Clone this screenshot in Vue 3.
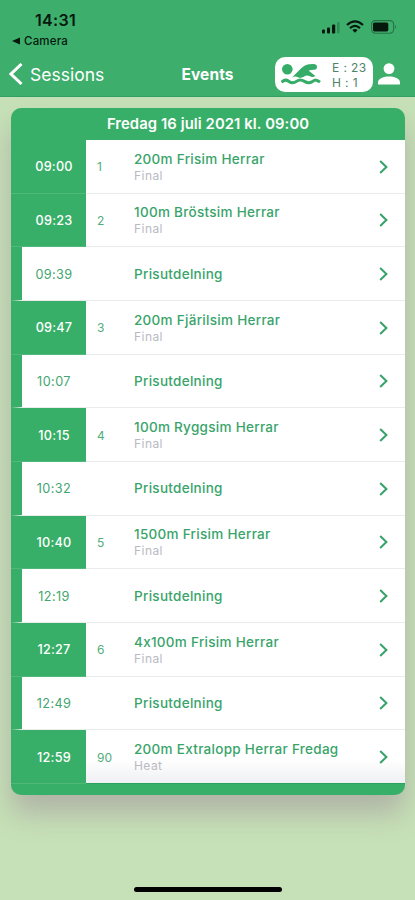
<template>
  <div class="screen">
    <header class="top">
      <div class="status">
        <div class="clock">
          <span class="time">14:31</span>
          <span class="back-app">
            <svg width="8" height="8" viewBox="0 0 8 8"><path d="M0 4 L8 0.6 V7.4 Z" fill="#06180e" /></svg>
            Camera
          </span>
        </div>
        <div class="indicators">
          <svg class="signal" width="18" height="13" viewBox="0 0 18 13" fill="#06180e">
            <rect x="0" y="8.5" width="3" height="4" rx="1" />
            <rect x="5" y="6.5" width="3" height="6" rx="1" />
            <rect x="10" y="3.5" width="3.2" height="9" rx="1" />
            <rect x="15" y="1" width="2.6" height="11.5" rx="1" opacity="0.22" />
          </svg>
          <svg class="wifi" width="18" height="13" viewBox="0 0 18 13" fill="none" stroke="#06180e" stroke-width="2.2">
            <path d="M1 5 Q9 -2.4 17 5" />
            <path d="M4 8.1 Q9 3.6 14 8.1" />
            <path d="M6.3 10 Q9 7.8 11.7 10 L9 12.8 Z" fill="#06180e" stroke="none" />
          </svg>
          <svg class="battery" width="26" height="14" viewBox="0 0 26 14">
            <rect x="0.6" y="0.6" width="22" height="12.6" rx="3.6" fill="none" stroke="#06180e" stroke-opacity="0.4" stroke-width="1.1" />
            <rect x="2" y="2.4" width="15.3" height="9" rx="1.6" fill="#06180e" />
            <path d="M24 4.8 Q25.8 6.9 24 9 Z" fill="#06180e" fill-opacity="0.5" />
          </svg>
        </div>
      </div>

      <nav class="nav">
        <div class="back">
          <svg width="14" height="22" viewBox="0 0 14 22" fill="none" stroke="#fff" stroke-width="3">
            <path d="M12.5 1 L2 11 L12.5 21" />
          </svg>
          <span>Sessions</span>
        </div>
        <h1>Events</h1>
        <div class="actions">
          <div class="pill">
            <svg width="40" height="22" viewBox="0 0 40 22" fill="#35ac67">
              <circle cx="6.3" cy="6.3" r="5.3" />
              <path d="M11 14.6 L19.2 6.2 Q23.5 1.6 28 1.2 L32.5 1 Q36.2 1.2 36 4.2 Q35.6 6.8 32.5 6.8 L27.5 7.4 L34.4 13 Q31.5 14.8 28.5 13 Q25.5 11.5 22.8 13.8 Q19.5 15.8 16.5 14 Q14 12.8 11 14.6 Z" />
              <path
                d="M0.5 19.2 C3.5 16.4 5.5 16.6 7.6 18.2 S12.5 20.6 15.5 18.4 S20.5 16.6 23.5 18.4 S28.5 20.4 31.5 18.4 S36 16.8 39 19.2"
                fill="none" stroke="#35ac67" stroke-width="3"
              />
            </svg>
            <div class="counts">
              <span>E : 23</span>
              <span>H : 1</span>
            </div>
          </div>
          <svg class="user" width="22" height="22" viewBox="0 0 22 22" fill="#fff">
            <circle cx="11" cy="5.6" r="5.4" />
            <path d="M0 21.5 V19.4 C0 15.6 6 13.6 11 13.6 S22 15.6 22 19.4 V21.5 Z" />
          </svg>
        </div>
      </nav>
    </header>

    <main class="card">
      <h2>Fredag 16 juli 2021 kl. 09:00</h2>
      <ul>
        <li v-for="event in events" :key="event.time" :class="{ pause: !event.nr }">
          <div class="start">{{ event.time }}</div>
          <div class="row">
            <div class="nr">{{ event.nr }}</div>
            <div class="info">
              <span class="title">{{ event.title }}</span>
              <span v-if="event.round" class="round">{{ event.round }}</span>
            </div>
            <svg class="chevron" width="9" height="14" viewBox="0 0 9 14" fill="none" stroke="#35a269" stroke-width="2">
              <path d="M1.2 1 L7.4 7 L1.2 13" />
            </svg>
          </div>
        </li>
      </ul>
    </main>

    <div class="home-bar"></div>
  </div>
</template>

<script setup>
const events = [
  { time: '09:00', nr: 1, title: '200m Frisim Herrar', round: 'Final' },
  { time: '09:23', nr: 2, title: '100m Bröstsim Herrar', round: 'Final' },
  { time: '09:39', title: 'Prisutdelning' },
  { time: '09:47', nr: 3, title: '200m Fjärilsim Herrar', round: 'Final' },
  { time: '10:07', title: 'Prisutdelning' },
  { time: '10:15', nr: 4, title: '100m Ryggsim Herrar', round: 'Final' },
  { time: '10:32', title: 'Prisutdelning' },
  { time: '10:40', nr: 5, title: '1500m Frisim Herrar', round: 'Final' },
  { time: '12:19', title: 'Prisutdelning' },
  { time: '12:27', nr: 6, title: '4x100m Frisim Herrar', round: 'Final' },
  { time: '12:49', title: 'Prisutdelning' },
  { time: '12:59', nr: 90, title: '200m Extralopp Herrar Fredag', round: 'Heat' },
]
</script>

<style>
body {
  margin: 0;
  background: #c6e1b7;
}
</style>

<style scoped>
.screen {
  display: flex;
  flex-direction: column;
  height: 900px;
  overflow: hidden;
  background: #c6e1b7;
  font-family: Inter, "Liberation Sans", sans-serif;
}

.top {
  box-sizing: border-box;
  height: 97px;
  flex: none;
  background: #3dae6c;
  border-bottom: 1px solid #2fa263;
}

.status {
  display: flex;
  justify-content: space-between;
  height: 52px;
  color: #06180e;
}

.clock {
  display: flex;
  flex-direction: column;
  padding: 10px 0 0 12px;
}

.time {
  padding-left: 23px;
  font-size: 16px;
  line-height: 20px;
  font-weight: 600;
  letter-spacing: 0.3px;
}

.back-app {
  display: flex;
  align-items: center;
  gap: 4px;
  height: 21px;
  font-size: 11.5px;
  font-weight: 500;
  letter-spacing: 0.2px;
}

.indicators {
  display: flex;
  align-items: flex-start;
  padding: 20px 18px 0 0;
}

.signal {
  margin-top: 1px;
}

.wifi {
  margin: 0 7px 0 6px;
}

.nav {
  display: grid;
  grid-template-columns: 1fr auto 1fr;
  align-items: center;
  height: 44px;
  padding: 0 15px 0 9px;
  color: #fff;
}

.back {
  display: flex;
  align-items: center;
  gap: 7px;
  font-size: 17.5px;
}

h1 {
  margin: 0;
  padding-left: 6px;
  font-size: 15.5px;
  font-weight: 700;
  letter-spacing: 0.1px;
}

.actions {
  display: flex;
  align-items: center;
  justify-content: flex-end;
  gap: 5px;
}

.pill {
  box-sizing: border-box;
  display: flex;
  align-items: center;
  justify-content: space-between;
  width: 98px;
  height: 35px;
  padding: 0 6px;
  border-radius: 10px;
  background: #fff;
}

.counts {
  display: flex;
  flex-direction: column;
  width: 35px;
  padding-top: 1px;
  font-size: 12px;
  line-height: 15px;
  letter-spacing: 0.4px;
  white-space: nowrap;
  color: #4b8468;
}

.card {
  box-sizing: border-box;
  flex: none;
  width: 394px;
  height: 687px;
  margin: 11px 0 0 11px;
  overflow: hidden;
  border-radius: 10px;
  background: #38af68;
  box-shadow: 0 18px 28px rgba(135, 100, 135, 0.36);
}

h2 {
  margin: 0;
  height: 32px;
  line-height: 32px;
  text-align: center;
  font-size: 14.8px;
  font-weight: 600;
  letter-spacing: 0.1px;
  color: #fff;
}

ul {
  margin: 0;
  padding: 0;
  list-style: none;
}

li {
  display: flex;
  height: 53.67px;
  color: #38a46a;
}

.row {
  box-sizing: border-box;
  flex: 1;
  display: flex;
  align-items: center;
  padding: 1px 17px 0 11px;
  border-bottom: 1px solid #e9ecea;
  background: #fff;
}

li:last-child .row {
  background: linear-gradient(#fff 55%, #eff0f3);
  border-bottom-color: #2ba160;
}

.start {
  box-sizing: border-box;
  display: flex;
  align-items: center;
  justify-content: center;
  width: 75px;
  padding: 1px 0 0 11px;
  border-bottom: 1px solid #50b87b;
  background: #38af68;
  color: #fff;
  font-size: 12.7px;
  font-weight: 500;
  letter-spacing: 0.2px;
}

.pause .start {
  border-left: 11px solid #38af68;
  border-bottom-color: #e9ecea;
  padding-left: 0;
  background: #fff;
  color: #43a570;
  font-weight: 400;
  letter-spacing: 0.4px;
}

.nr {
  width: 37px;
  font-size: 12px;
  color: #51ad7c;
}

.info {
  flex: 1;
  display: flex;
  flex-direction: column;
}

.title {
  font-size: 13.5px;
  line-height: 17px;
  font-weight: 500;
  letter-spacing: 0.29px;
}

.round {
  font-size: 12px;
  line-height: 15px;
  letter-spacing: 0.45px;
  color: #b9bac3;
}

.home-bar {
  width: 148px;
  height: 5px;
  flex: none;
  margin: auto auto 8px;
  border-radius: 3px;
  background: #000;
}
</style>
